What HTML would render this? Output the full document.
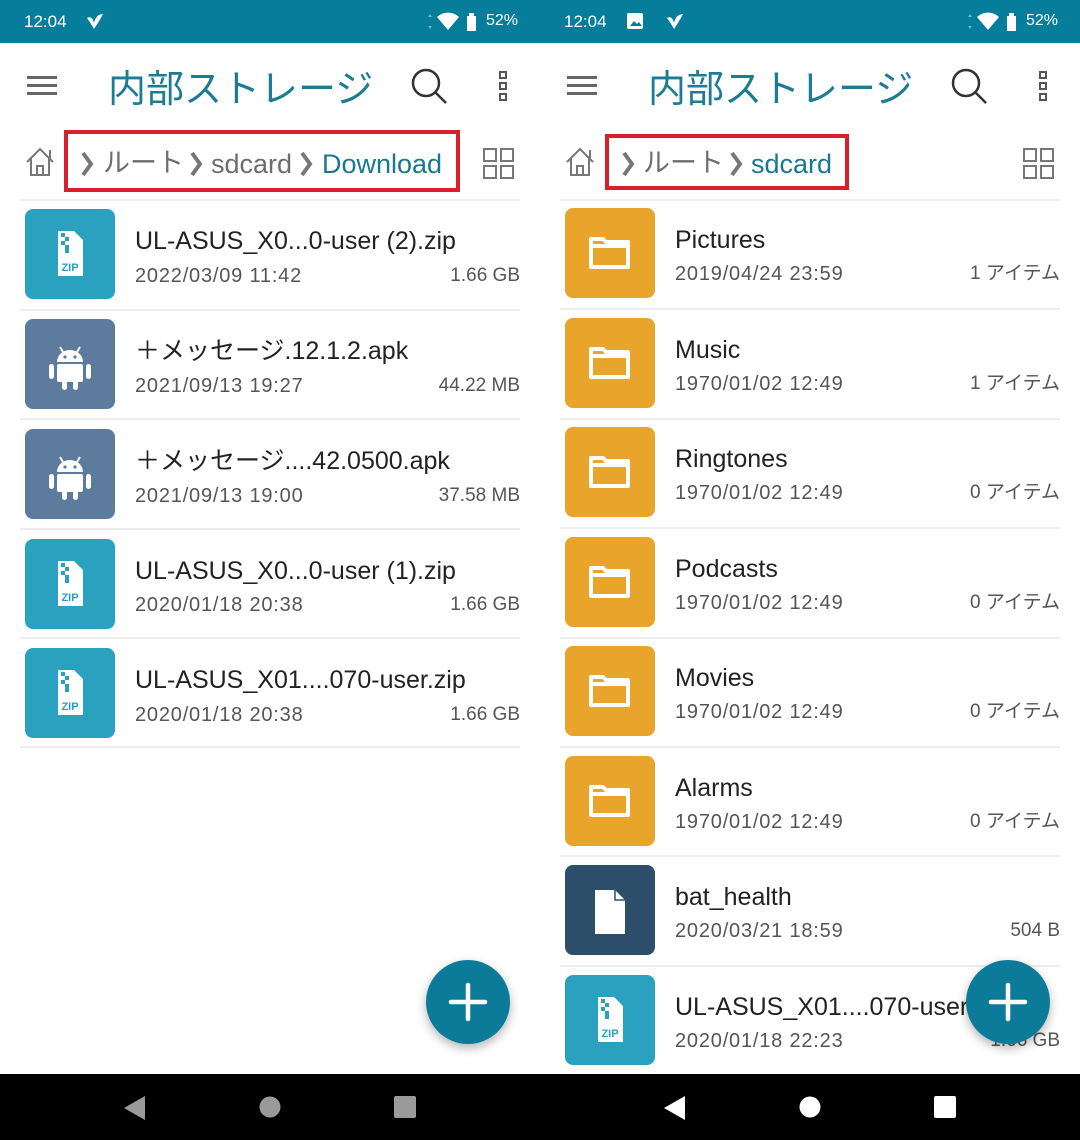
<!DOCTYPE html>
<html><head><meta charset="utf-8">
<style>
*{margin:0;padding:0;box-sizing:border-box}
body{width:1080px;height:1140px;background:#fff;position:relative;overflow:hidden;font-family:"Liberation Sans","Noto Sans CJK JP",sans-serif}
.p{position:absolute;top:0;width:540px;height:1140px;overflow:hidden;background:#fff}
.sb{position:absolute;left:0;top:0;width:540px;height:43px;background:#077d9c;color:#fff;font-size:17px}
.a{position:absolute}
.title{position:absolute;top:58px;font-size:38px;color:#1b7c92;letter-spacing:0px;font-family:"Noto Sans CJK JP",sans-serif}
.bt{position:absolute;top:147px;font-size:27px;line-height:34px;color:#6d6d6d;white-space:nowrap}
.jp{font-family:"Noto Sans CJK JP",sans-serif;top:144px}
.c{color:#17788f}
.red{position:absolute;border:4px solid #d8202a}
.div{position:absolute;left:20px;width:500px;height:2px;background:#ececec}
.ic{position:absolute;left:25px;width:90px;height:90px;border-radius:8px}
.nm{position:absolute;left:135px;font-size:25px;color:#222;white-space:nowrap;line-height:30px}
.dt{position:absolute;left:135px;font-size:20px;color:#555;line-height:24px;letter-spacing:0.8px}
.sz{position:absolute;right:20px;font-size:19px;color:#555;line-height:24px;font-family:"Liberation Sans","Noto Sans CJK JP",sans-serif}
.nav{position:absolute;left:0;top:1074px;width:540px;height:66px;background:#000}
.fab{position:absolute;width:84px;height:84px;border-radius:50%;background:#0b7b99;box-shadow:0 4px 10px rgba(0,0,0,.3)}
</style></head><body>

<!-- LEFT -->
<div class="p" style="left:0">
 <div class="sb">
  <div class="a" style="left:24px;top:12px">12:04</div>
  <svg class="a" style="left:84px;top:12px" width="22" height="20" viewBox="0 0 22 20"><path d="M3 6c3-2 6 0 7 5 1-5 4-9 9-9-2 4-5 9-9 15C8 13 5 9 3 6z" fill="#fff"/></svg>
  <svg class="a" style="left:427px;top:12px" width="60" height="20" viewBox="0 0 60 20"><path d="M3 2l2 3H1zM3 17l2-3H1z" fill="#6fb6c8"/><path d="M10 5a16 16 0 0 1 22 0L21 18z" fill="#fff"/><rect x="40" y="4" width="9" height="15" fill="#fff"/><rect x="42" y="1" width="5" height="3" fill="#fff"/></svg>
  <div class="a" style="left:486px;top:12px;font-size:16px">52%</div>
 </div>
 <svg class="a" style="left:27px;top:75px" width="30" height="22"><g fill="#666"><rect y="1" width="30" height="3"/><rect y="9" width="30" height="3"/><rect y="17" width="30" height="3"/></g></svg>
 <div class="title" style="left:108px">内部ストレージ</div>
 <svg class="a" style="left:410px;top:67px" width="38" height="38"><circle cx="16" cy="16" r="13" fill="none" stroke="#333" stroke-width="2.5"/><path d="M25 25l11 11" stroke="#333" stroke-width="2.5"/></svg>
 <svg class="a" style="left:498px;top:70px" width="12" height="32"><g fill="none" stroke="#555" stroke-width="2"><rect x="2" y="2" width="6" height="6"/><rect x="2" y="13" width="6" height="6"/><rect x="2" y="24" width="6" height="6"/></g></svg>
 <svg class="a" style="left:24px;top:146px" width="32" height="32" viewBox="0 0 32 32"><path d="M3 16L16 3l13 13M7 12v17h18V12M13 29v-9h6v9M26 4v8" fill="none" stroke="#777" stroke-width="2"/></svg>
 <svg class="a" style="left:80px;top:151px" width="14" height="26"><path d="M3 2l8 11-8 11" fill="none" stroke="#777" stroke-width="4"/></svg>
 <div class="bt jp" style="left:103px">ルート</div>
 <svg class="a" style="left:189px;top:151px" width="14" height="26"><path d="M3 2l8 11-8 11" fill="none" stroke="#777" stroke-width="4"/></svg>
 <div class="bt" style="left:211px">sdcard</div>
 <svg class="a" style="left:299px;top:151px" width="14" height="26"><path d="M3 2l8 11-8 11" fill="none" stroke="#777" stroke-width="4"/></svg>
 <div class="bt c" style="left:322px">Download</div>
 <div class="red" style="left:64px;top:130px;width:396px;height:62px"></div>
 <svg class="a" style="left:483px;top:148px" width="32" height="32"><g fill="none" stroke="#777" stroke-width="2"><rect x="1" y="1" width="12" height="12"/><rect x="18" y="1" width="12" height="12"/><rect x="1" y="18" width="12" height="12"/><rect x="18" y="18" width="12" height="12"/></g></svg>

 <div class="div" style="top:199px"></div>
 <div class="ic" style="top:209px;background:#2aa1bf"><svg width="90" height="90"><path d="M33 22h16l9 9v36H33z" fill="#fff"/><g fill="#2aa1bf"><rect x="36" y="24" width="4" height="4"/><rect x="40" y="28" width="4" height="4"/><rect x="36" y="32" width="4" height="4"/><rect x="40" y="36" width="4" height="8"/></g><text x="45" y="62" font-size="11" font-weight="bold" fill="#2aa1bf" text-anchor="middle" font-family="Liberation Sans">ZIP</text></svg></div>
 <div class="nm" style="top:226px">UL-ASUS_X0...0-user (2).zip</div>
 <div class="dt" style="top:264px">2022/03/09 11:42</div><div class="sz" style="top:264px">1.66 GB</div>
 <div class="div" style="top:309px"></div>

 <div class="ic" style="top:319px;background:#5d7b9c"><svg width="90" height="90"><g fill="#fff"><path d="M32 43a13 12 0 0 1 26 0z"/><rect x="32" y="45" width="26" height="18" rx="2"/><rect x="24" y="45" width="5" height="15" rx="2.5"/><rect x="61" y="45" width="5" height="15" rx="2.5"/><rect x="37" y="60" width="5" height="11" rx="2.5"/><rect x="48" y="60" width="5" height="11" rx="2.5"/><path d="M35 28l3 5M55 28l-3 5" stroke="#fff" stroke-width="2"/></g><circle cx="40" cy="38" r="1.6" fill="#5d7b9c"/><circle cx="50" cy="38" r="1.6" fill="#5d7b9c"/></svg></div>
 <div class="nm" style="top:336px">＋メッセージ.12.1.2.apk</div>
 <div class="dt" style="top:374px">2021/09/13 19:27</div><div class="sz" style="top:374px">44.22 MB</div>
 <div class="div" style="top:418px"></div>

 <div class="ic" style="top:429px;background:#5d7b9c"><svg width="90" height="90"><g fill="#fff"><path d="M32 43a13 12 0 0 1 26 0z"/><rect x="32" y="45" width="26" height="18" rx="2"/><rect x="24" y="45" width="5" height="15" rx="2.5"/><rect x="61" y="45" width="5" height="15" rx="2.5"/><rect x="37" y="60" width="5" height="11" rx="2.5"/><rect x="48" y="60" width="5" height="11" rx="2.5"/><path d="M35 28l3 5M55 28l-3 5" stroke="#fff" stroke-width="2"/></g><circle cx="40" cy="38" r="1.6" fill="#5d7b9c"/><circle cx="50" cy="38" r="1.6" fill="#5d7b9c"/></svg></div>
 <div class="nm" style="top:446px">＋メッセージ....42.0500.apk</div>
 <div class="dt" style="top:484px">2021/09/13 19:00</div><div class="sz" style="top:484px">37.58 MB</div>
 <div class="div" style="top:528px"></div>

 <div class="ic" style="top:539px;background:#2aa1bf"><svg width="90" height="90"><path d="M33 22h16l9 9v36H33z" fill="#fff"/><g fill="#2aa1bf"><rect x="36" y="24" width="4" height="4"/><rect x="40" y="28" width="4" height="4"/><rect x="36" y="32" width="4" height="4"/><rect x="40" y="36" width="4" height="8"/></g><text x="45" y="62" font-size="11" font-weight="bold" fill="#2aa1bf" text-anchor="middle" font-family="Liberation Sans">ZIP</text></svg></div>
 <div class="nm" style="top:556px">UL-ASUS_X0...0-user (1).zip</div>
 <div class="dt" style="top:593px">2020/01/18 20:38</div><div class="sz" style="top:593px">1.66 GB</div>
 <div class="div" style="top:637px"></div>

 <div class="ic" style="top:648px;background:#2aa1bf"><svg width="90" height="90"><path d="M33 22h16l9 9v36H33z" fill="#fff"/><g fill="#2aa1bf"><rect x="36" y="24" width="4" height="4"/><rect x="40" y="28" width="4" height="4"/><rect x="36" y="32" width="4" height="4"/><rect x="40" y="36" width="4" height="8"/></g><text x="45" y="62" font-size="11" font-weight="bold" fill="#2aa1bf" text-anchor="middle" font-family="Liberation Sans">ZIP</text></svg></div>
 <div class="nm" style="top:665px">UL-ASUS_X01....070-user.zip</div>
 <div class="dt" style="top:703px">2020/01/18 20:38</div><div class="sz" style="top:703px">1.66 GB</div>
 <div class="div" style="top:746px"></div>

 <div class="fab" style="left:426px;top:960px"><svg width="84" height="84"><path d="M42 25v34M25 42h34" stroke="#fff" stroke-width="4.5" stroke-linecap="round"/></svg></div>
 <div class="nav"><svg width="540" height="66"><path d="M145 22v24l-21-12z" fill="#9a9a9a"/><circle cx="270" cy="33" r="10.5" fill="#9a9a9a"/><rect x="394" y="22" width="22" height="22" rx="2" fill="#9a9a9a"/></svg></div>
</div>

<!-- RIGHT -->
<div class="p" style="left:540px">
 <div class="sb">
  <div class="a" style="left:24px;top:12px">12:04</div>
  <svg class="a" style="left:86px;top:12px" width="18" height="18"><rect x="1" y="1" width="16" height="16" rx="2" fill="#fff"/><path d="M4 14l4-5 3 3 2-2 3 4z" fill="#077d9c"/></svg>
  <svg class="a" style="left:124px;top:12px" width="22" height="20" viewBox="0 0 22 20"><path d="M3 6c3-2 6 0 7 5 1-5 4-9 9-9-2 4-5 9-9 15C8 13 5 9 3 6z" fill="#fff"/></svg>
  <svg class="a" style="left:427px;top:12px" width="60" height="20" viewBox="0 0 60 20"><path d="M3 2l2 3H1zM3 17l2-3H1z" fill="#6fb6c8"/><path d="M10 5a16 16 0 0 1 22 0L21 18z" fill="#fff"/><rect x="40" y="4" width="9" height="15" fill="#fff"/><rect x="42" y="1" width="5" height="3" fill="#fff"/></svg>
  <div class="a" style="left:486px;top:12px;font-size:16px">52%</div>
 </div>
 <svg class="a" style="left:27px;top:75px" width="30" height="22"><g fill="#666"><rect y="1" width="30" height="3"/><rect y="9" width="30" height="3"/><rect y="17" width="30" height="3"/></g></svg>
 <div class="title" style="left:108px">内部ストレージ</div>
 <svg class="a" style="left:410px;top:67px" width="38" height="38"><circle cx="16" cy="16" r="13" fill="none" stroke="#333" stroke-width="2.5"/><path d="M25 25l11 11" stroke="#333" stroke-width="2.5"/></svg>
 <svg class="a" style="left:498px;top:70px" width="12" height="32"><g fill="none" stroke="#555" stroke-width="2"><rect x="2" y="2" width="6" height="6"/><rect x="2" y="13" width="6" height="6"/><rect x="2" y="24" width="6" height="6"/></g></svg>
 <svg class="a" style="left:24px;top:146px" width="32" height="32" viewBox="0 0 32 32"><path d="M3 16L16 3l13 13M7 12v17h18V12M13 29v-9h6v9M26 4v8" fill="none" stroke="#777" stroke-width="2"/></svg>
 <svg class="a" style="left:81px;top:151px" width="14" height="26"><path d="M3 2l8 11-8 11" fill="none" stroke="#777" stroke-width="4"/></svg>
 <div class="bt jp" style="left:103px">ルート</div>
 <svg class="a" style="left:189px;top:151px" width="14" height="26"><path d="M3 2l8 11-8 11" fill="none" stroke="#777" stroke-width="4"/></svg>
 <div class="bt c" style="left:211px">sdcard</div>
 <div class="red" style="left:65px;top:134px;width:244px;height:56px"></div>
 <svg class="a" style="left:483px;top:148px" width="32" height="32"><g fill="none" stroke="#777" stroke-width="2"><rect x="1" y="1" width="12" height="12"/><rect x="18" y="1" width="12" height="12"/><rect x="1" y="18" width="12" height="12"/><rect x="18" y="18" width="12" height="12"/></g></svg>

 <div class="div" style="top:199px"></div>
 <div class="ic" style="top:208px;background:#e8a42b"><svg width="90" height="90"><path d="M26 31h12l3 3h22v25H26z" fill="none" stroke="#fff" stroke-width="4" stroke-linejoin="round"/><path d="M26 38h37" stroke="#fff" stroke-width="4"/></svg></div>
 <div class="nm" style="top:225px">Pictures</div>
 <div class="dt" style="top:262px">2019/04/24 23:59</div><div class="sz" style="top:262px">1 アイテム</div>
 <div class="div" style="top:308px"></div>

 <div class="ic" style="top:318px;background:#e8a42b"><svg width="90" height="90"><path d="M26 31h12l3 3h22v25H26z" fill="none" stroke="#fff" stroke-width="4" stroke-linejoin="round"/><path d="M26 38h37" stroke="#fff" stroke-width="4"/></svg></div>
 <div class="nm" style="top:335px">Music</div>
 <div class="dt" style="top:372px">1970/01/02 12:49</div><div class="sz" style="top:372px">1 アイテム</div>
 <div class="div" style="top:418px"></div>

 <div class="ic" style="top:427px;background:#e8a42b"><svg width="90" height="90"><path d="M26 31h12l3 3h22v25H26z" fill="none" stroke="#fff" stroke-width="4" stroke-linejoin="round"/><path d="M26 38h37" stroke="#fff" stroke-width="4"/></svg></div>
 <div class="nm" style="top:444px">Ringtones</div>
 <div class="dt" style="top:481px">1970/01/02 12:49</div><div class="sz" style="top:481px">0 アイテム</div>
 <div class="div" style="top:527px"></div>

 <div class="ic" style="top:537px;background:#e8a42b"><svg width="90" height="90"><path d="M26 31h12l3 3h22v25H26z" fill="none" stroke="#fff" stroke-width="4" stroke-linejoin="round"/><path d="M26 38h37" stroke="#fff" stroke-width="4"/></svg></div>
 <div class="nm" style="top:554px">Podcasts</div>
 <div class="dt" style="top:591px">1970/01/02 12:49</div><div class="sz" style="top:591px">0 アイテム</div>
 <div class="div" style="top:637px"></div>

 <div class="ic" style="top:646px;background:#e8a42b"><svg width="90" height="90"><path d="M26 31h12l3 3h22v25H26z" fill="none" stroke="#fff" stroke-width="4" stroke-linejoin="round"/><path d="M26 38h37" stroke="#fff" stroke-width="4"/></svg></div>
 <div class="nm" style="top:663px">Movies</div>
 <div class="dt" style="top:700px">1970/01/02 12:49</div><div class="sz" style="top:700px">0 アイテム</div>
 <div class="div" style="top:746px"></div>

 <div class="ic" style="top:756px;background:#e8a42b"><svg width="90" height="90"><path d="M26 31h12l3 3h22v25H26z" fill="none" stroke="#fff" stroke-width="4" stroke-linejoin="round"/><path d="M26 38h37" stroke="#fff" stroke-width="4"/></svg></div>
 <div class="nm" style="top:773px">Alarms</div>
 <div class="dt" style="top:810px">1970/01/02 12:49</div><div class="sz" style="top:810px">0 アイテム</div>
 <div class="div" style="top:855px"></div>

 <div class="ic" style="top:865px;background:#2d4e6b"><svg width="90" height="90"><path d="M30 25h20l10 10v34H30z" fill="#fff"/><path d="M50 25v10h10" fill="none" stroke="#2d4e6b" stroke-width="1.5"/></svg></div>
 <div class="nm" style="top:882px">bat_health</div>
 <div class="dt" style="top:919px">2020/03/21 18:59</div><div class="sz" style="top:919px">504 B</div>
 <div class="div" style="top:965px"></div>

 <div class="ic" style="top:975px;background:#2aa1bf"><svg width="90" height="90"><path d="M33 22h16l9 9v36H33z" fill="#fff"/><g fill="#2aa1bf"><rect x="36" y="24" width="4" height="4"/><rect x="40" y="28" width="4" height="4"/><rect x="36" y="32" width="4" height="4"/><rect x="40" y="36" width="4" height="8"/></g><text x="45" y="62" font-size="11" font-weight="bold" fill="#2aa1bf" text-anchor="middle" font-family="Liberation Sans">ZIP</text></svg></div>
 <div class="nm" style="top:992px">UL-ASUS_X01....070-user.zip</div>
 <div class="dt" style="top:1029px">2020/01/18 22:23</div><div class="sz" style="top:1029px">1.66 GB</div>

 <div class="fab" style="left:426px;top:960px"><svg width="84" height="84"><path d="M42 25v34M25 42h34" stroke="#fff" stroke-width="4.5" stroke-linecap="round"/></svg></div>
 <div class="nav"><svg width="540" height="66"><path d="M145 22v24l-21-12z" fill="#fff"/><circle cx="270" cy="33" r="10.5" fill="#fff"/><rect x="394" y="22" width="22" height="22" rx="2" fill="#fff"/></svg></div>
</div>
</body></html>
